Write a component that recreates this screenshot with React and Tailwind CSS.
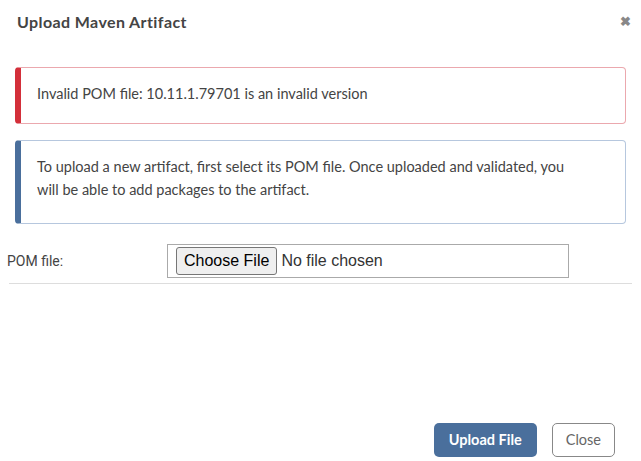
import React from 'react'

const App = () => {
  return (
    <div className="w-[641px] h-[461px] bg-white flex flex-col text-[#333]" style={{ fontFamily: 'Lato, sans-serif' }}>
      {/* Header */}
      <div className="flex items-center justify-between pl-[17px] pr-[10px] h-[43px]">
        <h2 className="text-[16px] font-bold text-[#444] leading-none tracking-[0.4px]">Upload Maven Artifact</h2>
        <button className="text-[#888] text-[13px] leading-none font-bold">✖</button>
      </div>

      {/* Alerts */}
      <div className="px-[15px] pt-[24px] flex flex-col gap-[16px]">
        <div className="border border-[#eba8ae] border-l-[6px] border-l-[#d32f3a] rounded-[4px] h-[57px] flex items-center pl-[16px] pb-[3px] text-[14.5px] text-[#444]">
          Invalid POM file: 10.11.1.79701 is an invalid version
        </div>
        <div className="border border-[#b6c7de] border-l-[6px] border-l-[#4a6f9c] rounded-[4px] h-[84px] pt-[14px] pl-[16px] pr-[45px] text-[14.5px] leading-[23px] text-[#444]">
          To upload a new artifact, first select its POM file. Once uploaded and validated, you will be able to add packages to the artifact.
        </div>
      </div>

      {/* POM file row */}
      <div className="mt-[20px] mx-[9px] border-b border-[#ddd] pb-[5px] flex items-center">
        <label className="w-[160px] text-[14px] text-[#444] -ml-[2px]" style={{ fontFamily: 'Roboto, sans-serif' }}>POM file:</label>
        <div className="w-[402px] h-[34px] border border-[#aaa] flex items-center pl-[8px]">
          <input type="file" className="text-[16px] file:px-[7px] file:py-[1px] file:mr-[4px] file:border file:border-[#767676] file:rounded-[3px] file:bg-[#efefef] file:text-black" style={{ fontFamily: '"Liberation Sans", Arial, sans-serif' }} />
        </div>
      </div>

      <div className="flex-1" />

      {/* Footer */}
      <div className="flex justify-end gap-[15px] pr-[26px] pb-[4px]">
        <button className="h-[34px] px-[15px] rounded-[5px] bg-[#4a6f9c] text-white font-bold text-[14.5px]">Upload File</button>
        <button className="h-[34px] px-[13px] rounded-[5px] border border-[#888] text-[#666] text-[14.5px] bg-white">Close</button>
      </div>
    </div>
  )
}

export default App
